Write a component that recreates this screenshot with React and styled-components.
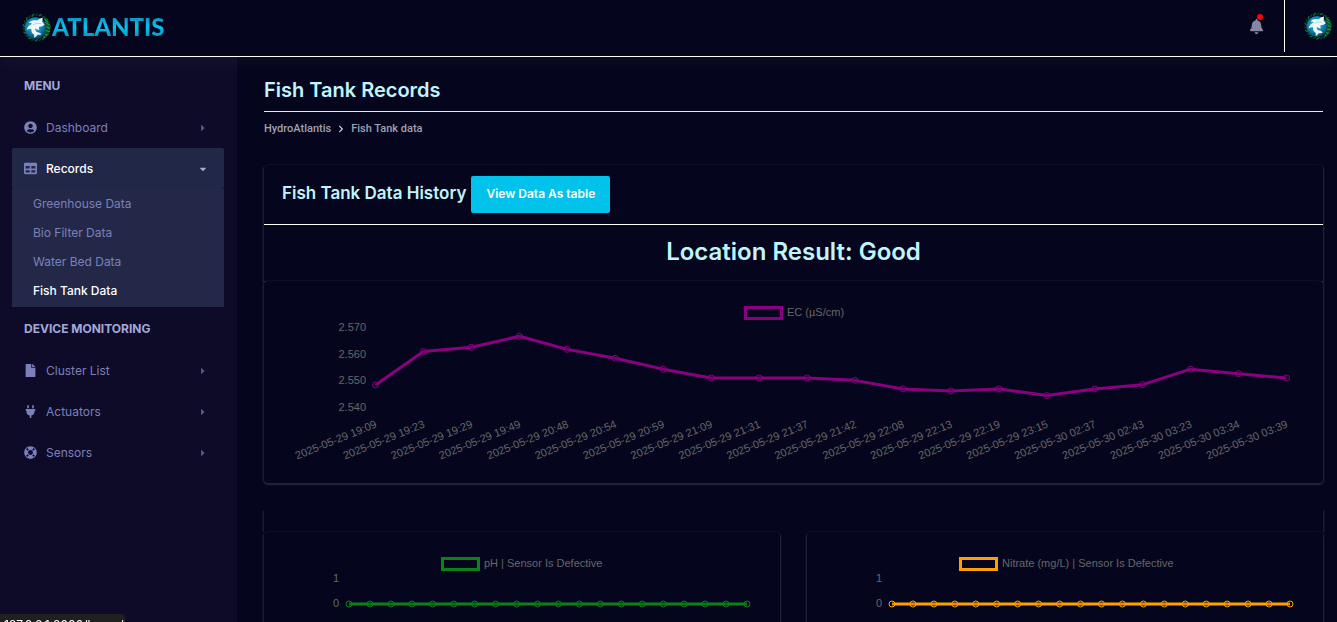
import React from "react";
import styled, { createGlobalStyle, css } from "styled-components";
import {
  FaUserCircle, FaTable, FaFile, FaPlug, FaLifeRing, FaBell,
  FaCaretRight, FaCaretDown, FaChevronRight,
} from "react-icons/fa";

const color = {
  page: "#05061d",
  sidebar: "#0e0b28",
  active: "#232849",
  nav: "#7b80ba",
  heading: "#c0f5ff",
  accent: "#00c2ea",
  axis: "#666666",
};

const GlobalStyle = createGlobalStyle`
  *, *::before, *::after { box-sizing: border-box; }
  body {
    margin: 0;
    background: ${color.page};
    color: #fff;
    font-family: Inter, "Liberation Sans", sans-serif;
  }
  h1, h2, h3, p, ul, ol { margin: 0; padding: 0; }
  ul, ol { list-style: none; }
  a { color: inherit; text-decoration: none; }
  button { font: inherit; border: 0; padding: 0; background: none; cursor: pointer; }
`;

const Shell = styled.div`
  display: flex;
  flex-direction: column;
  height: 100vh;
  overflow: hidden;
`;

const TopBar = styled.header`
  display: flex;
  align-items: flex-start;
  justify-content: space-between;
  flex: none;
  height: 57px;
  border-bottom: 1px solid #fff;
  background: ${color.page};
  box-shadow: 0 0 20px rgba(154, 154, 154, 0.1);
  z-index: 1;
`;

const Brand = styled.a`
  display: flex;
  align-items: center;
  height: 54px;
  padding-left: 21px;
`;

const BrandName = styled.span`
  font: 900 24px/32px Lato, sans-serif;
  color: transparent;
  background: linear-gradient(#078fbd 15%, #06c4ee 50%, #078fbd 85%);
  background-clip: text;
`;

const TopActions = styled.div`
  display: flex;
  height: 52px;
`;

const BellButton = styled.button`
  position: relative;
  width: 56px;
  color: #8587a3;
  font-size: 15px;
  svg { display: block; margin: 0 auto; }
`;

const Dot = styled.span`
  position: absolute;
  top: 14px;
  right: 21px;
  width: 6px;
  height: 6px;
  border-radius: 50%;
  background: #ff0000;
`;

const ProfileButton = styled.button`
  display: flex;
  align-items: center;
  width: 53px;
  padding-left: 18px;
  border-left: 1px solid #fff;
`;

const Body = styled.div`
  display: flex;
  flex: 1;
  min-height: 0;
`;

const Sidebar = styled.nav`
  flex: none;
  width: 237px;
  padding: 17px 13px 0 12px;
  background: ${color.sidebar};
`;

const SideHeading = styled.p`
  padding: 0 12px;
  margin-bottom: 9px;
  font-size: 12px;
  font-weight: 700;
  line-height: 24px;
  color: #a3a8d8;
  text-transform: uppercase;
`;

const NavLink = styled.a`
  display: flex;
  align-items: center;
  height: 41px;
  padding: 0 17px 0 12px;
  border-radius: 2px;
  font-size: 12px;
  color: ${color.nav};
  ${(p) => p.$open && css`
    background: #212746;
    color: #fff;
    font-weight: 500;
  `}
`;

const NavIcon = styled.span`
  display: flex;
  justify-content: center;
  width: 13px;
  margin-right: 9px;
  font-size: 13px;
  color: ${color.nav};
`;

const NavCaret = styled.span`
  display: flex;
  justify-content: center;
  width: 8px;
  margin-left: auto;
  font-size: 10px;
  color: ${(p) => (p.$open ? "#a9abc4" : "#5a5c86")};
`;

const SubMenu = styled.ul`
  padding-bottom: 2px;
  margin-bottom: 10px;
  background: ${color.active};
`;

const SubLink = styled.a`
  display: block;
  padding-left: 21px;
  font-size: 12px;
  line-height: 29px;
  color: ${(p) => (p.$current ? "#fff" : color.nav)};
  font-weight: ${(p) => (p.$current ? 500 : 400)};
`;

const Main = styled.main`
  flex: 1;
  min-width: 0;
  padding: 19px 14px 0 27px;
  overflow-y: auto;
  scrollbar-width: none;
`;

const PageTitle = styled.h1`
  padding-bottom: 7px;
  border-bottom: 1px solid #e4e6f0;
  font-size: 20px;
  font-weight: 600;
  line-height: 28px;
  color: ${color.heading};
`;

const Breadcrumb = styled.ol`
  display: flex;
  align-items: center;
  gap: 6px;
  margin: 8px 0 27px;
  font-family: Roboto, sans-serif;
  font-size: 11px;
  font-weight: 500;
  line-height: 18px;
  color: #a0a1b3;
  svg { display: block; font-size: 8px; color: #d0d1dd; }
`;

const surface = css`
  background: ${color.page};
  box-shadow: 0 1px 2px 1px rgba(154, 154, 204, 0.22);
`;

const SummaryCard = styled.section`
  ${surface}
  border-radius: 4px 4px 0 0;
`;

const CardHeader = styled.div`
  display: flex;
  align-items: center;
  gap: 5px;
  padding: 11px 18px;
  border-bottom: 1px solid #fff;
`;

const CardTitle = styled.h2`
  padding-bottom: 3px;
  font-size: 17px;
  font-weight: 600;
  line-height: 24px;
  color: ${color.heading};
`;

const PrimaryButton = styled.button`
  height: 37px;
  padding: 0 15px 2px;
  border-radius: 2px;
  background: ${color.accent};
  color: #fff;
  font-size: 12px;
  font-weight: 600;
`;

const Result = styled.h3`
  padding: 11px 0 13px;
  font-size: 24px;
  font-weight: 600;
  line-height: 32px;
  text-align: center;
  color: ${color.heading};
`;

const ChartCard = styled.section`
  ${surface}
  position: relative;
  border-radius: 4px;
`;

const PanelEdge = styled.div`
  ${surface}
  height: 22px;
  margin-top: 27px;
  clip-path: inset(0 -2px);
`;

const ChartGrid = styled.div`
  display: grid;
  grid-template-columns: 1fr 1fr;
  gap: 27px;
`;

const ChartSvg = styled.svg`
  display: block;
  width: 100%;
  height: auto;
  font-family: "Liberation Sans", sans-serif;
  font-size: 11px;
  fill: ${color.axis};
`;

const StatusBubble = styled.div`
  position: fixed;
  left: 0;
  bottom: -14px;
  z-index: 2;
  height: 22px;
  width: 125px;
  padding-left: 4px;
  border-radius: 0 4px 0 0;
  background: #202020;
  color: #fff;
  font-size: 12px;
  line-height: 22px;
  white-space: nowrap;
`;

function Emblem({ size, id }) {
  const leaves = Array.from({ length: 22 }, (_, i) => i * (360 / 22));
  return (
    <svg width={size} height={size} viewBox="0 0 30 30" aria-hidden="true">
      <defs>
        <radialGradient id={id} cx="45%" cy="40%" r="60%">
          <stop offset="0" stopColor="#3fc0e6" />
          <stop offset="0.6" stopColor="#0e83b3" />
          <stop offset="1" stopColor="#07466b" />
        </radialGradient>
      </defs>
      {leaves.map((a, i) => (
        <ellipse key={a} cx="15" cy="2.6" rx="0.8" ry="2"
          fill={i % 2 ? "#0b6b2c" : "#06401f"}
          transform={`rotate(${a} 15 15) rotate(55 15 2.6)`} />
      ))}
      <circle cx="14" cy="15.5" r="10.500" fill={`url(#${id})`} />
      <path d="M21 4c7 3 9 9 7 14-1 4-4 7-8 9 4-6 6-15 1-23Z" fill="#0a4a25" />
      <path d="M23 7l3 3M23.500 10l4 3M24.500 14l3.500 2M24 18l4 1M23 21.500l3 1M21.500 24l2 1" stroke="#1fa34a" strokeWidth="1" />
      <path d="M22.800 12.300 20.500 9.500 21 5.500C18.500 6 16.800 7 15.800 8.300 12 7.500 9 8.200 7.500 10.500 9 10.300 10 10.700 10.800 11.500 8 12.500 6 14.500 5.500 17.500 7 16.500 8.500 16 10 16.300 9.800 19 10.800 21 13 22.200L12.500 25C14 24.300 15.200 23.200 15.800 21.900 17 22.300 18.500 22.200 19.800 21.500 18.500 20.200 17 19.300 15.200 19.300 13.800 18.200 13.500 17 14 15.800 15 16.800 16.200 17.300 17.800 17.300 17.300 16.200 17.200 15.200 17.500 14.200 19.500 14.300 21.500 13.600 22.800 12.300Z" fill="#eefaff" />
      <path d="M11.500 12.500c2.500-1.600 5-1.900 8-1.200" fill="none" stroke="#8fcfe6" strokeWidth="0.8" />
    </svg>
  );
}

function NavItem({ icon, label, open }) {
  return (
    <NavLink href="#" $open={open}>
      <NavIcon>{icon}</NavIcon>
      {label}
      <NavCaret $open={open}>{open ? <FaCaretDown /> : <FaCaretRight />}</NavCaret>
    </NavLink>
  );
}

function LineChart({ width, height, stroke, legend, legendX, legendY, axis, axisX, points, labels, labelY }) {
  return (
    <ChartSvg viewBox={`0 0 ${width} ${height}`} role="img" aria-label={legend}>
      <rect x={legendX + 1.5} y={legendY + 1.5} width="36" height="11" fill="none" stroke={stroke} strokeWidth="3" />
      <text x={legendX + 43} y={legendY + 10}>{legend}</text>
      {axis.map(([text, y]) => (
        <text key={text} x={axisX} y={y + 4} textAnchor="end">{text}</text>
      ))}
      <polyline points={points.map((p) => p.join(",")).join(" ")} fill="none" stroke={stroke} strokeWidth="3" strokeLinejoin="round" />
      {points.map(([x, y]) => (
        <circle key={x} cx={x} cy={y} r="3" fill="rgba(0,0,0,0.1)" stroke={stroke} />
      ))}
      {labels && labels.map((text, i) => (
        <text key={text} textAnchor="end" transform={`translate(${points[i][0] + 2} ${labelY}) rotate(-22)`}>{text}</text>
      ))}
    </ChartSvg>
  );
}

const spread = (from, to, ys) => ys.map((y, i) => [from + ((to - from) * i) / (ys.length - 1), y]);

const ecLabels = [
  "2025-05-29 19:09", "2025-05-29 19:23", "2025-05-29 19:29", "2025-05-29 19:49", "2025-05-29 20:48",
  "2025-05-29 20:54", "2025-05-29 20:59", "2025-05-29 21:09", "2025-05-29 21:31", "2025-05-29 21:37",
  "2025-05-29 21:42", "2025-05-29 22:08", "2025-05-29 22:13", "2025-05-29 22:19", "2025-05-29 23:15",
  "2025-05-30 02:37", "2025-05-30 02:43", "2025-05-30 03:23", "2025-05-30 03:34", "2025-05-30 03:39",
];
const ecValues = [
  2.5485, 2.561, 2.5626, 2.5667, 2.5618, 2.5585, 2.5544, 2.5511, 2.5511, 2.5511,
  2.5502, 2.547, 2.5462, 2.547, 2.5445, 2.547, 2.5486, 2.5544, 2.5527, 2.5511,
];
const ecPoints = spread(111.5, 1022.5, ecValues.map((v) => 46.5 + (2.57 - v) * 2670));
const flat = spread(85, 483, Array(20).fill(72));

export default function App() {
  return (
    <>
      <GlobalStyle />
      <Shell>
        <TopBar>
          <Brand href="#">
            <Emblem size={31} id="brandSea" />
            <BrandName>ATLANTIS</BrandName>
          </Brand>
          <TopActions>
            <BellButton aria-label="Notifications"><FaBell /><Dot /></BellButton>
            <ProfileButton aria-label="Profile"><Emblem size={30} id="profileSea" /></ProfileButton>
          </TopActions>
        </TopBar>
        <Body>
          <Sidebar>
            <SideHeading>Menu</SideHeading>
            <NavItem icon={<FaUserCircle />} label="Dashboard" />
            <NavItem icon={<FaTable />} label="Records" open />
            <SubMenu>
              <li><SubLink href="#">Greenhouse Data</SubLink></li>
              <li><SubLink href="#">Bio Filter Data</SubLink></li>
              <li><SubLink href="#">Water Bed Data</SubLink></li>
              <li><SubLink href="#" $current>Fish Tank Data</SubLink></li>
            </SubMenu>
            <SideHeading>Device Monitoring</SideHeading>
            <NavItem icon={<FaFile />} label="Cluster List" />
            <NavItem icon={<FaPlug />} label="Actuators" />
            <NavItem icon={<FaLifeRing />} label="Sensors" />
          </Sidebar>
          <Main>
            <PageTitle>Fish Tank Records</PageTitle>
            <Breadcrumb>
              <li><a href="#">HydroAtlantis</a></li>
              <li><FaChevronRight /></li>
              <li>Fish Tank data</li>
            </Breadcrumb>
            <SummaryCard>
              <CardHeader>
                <CardTitle>Fish Tank Data History</CardTitle>
                <PrimaryButton>View Data As table</PrimaryButton>
              </CardHeader>
              <Result>Location Result: Good</Result>
            </SummaryCard>
            <ChartCard>
              <LineChart width={1059} height={202} stroke="#8b0080" legend="EC (µS/cm)"
                legendX={480} legendY={25} axisX={102}
                axis={[["2.570", 46], ["2.560", 73], ["2.550", 99], ["2.540", 126]]}
                points={ecPoints} labels={ecLabels} labelY={146} />
            </ChartCard>
            <PanelEdge />
            <ChartGrid>
              <ChartCard>
                <LineChart width={516} height={202} stroke="#0a8218" legend="pH | Sensor Is Defective"
                  legendX={177} legendY={25} axisX={75} axis={[["1", 46], ["0", 71]]} points={flat} />
              </ChartCard>
              <ChartCard>
                <LineChart width={516} height={202} stroke="#ffa000" legend="Nitrate (mg/L) | Sensor Is Defective"
                  legendX={152} legendY={25} axisX={75} axis={[["1", 46], ["0", 71]]} points={flat} />
              </ChartCard>
            </ChartGrid>
          </Main>
        </Body>
      </Shell>
      <StatusBubble>127.0.0.1:8000/home/</StatusBubble>
    </>
  );
}
